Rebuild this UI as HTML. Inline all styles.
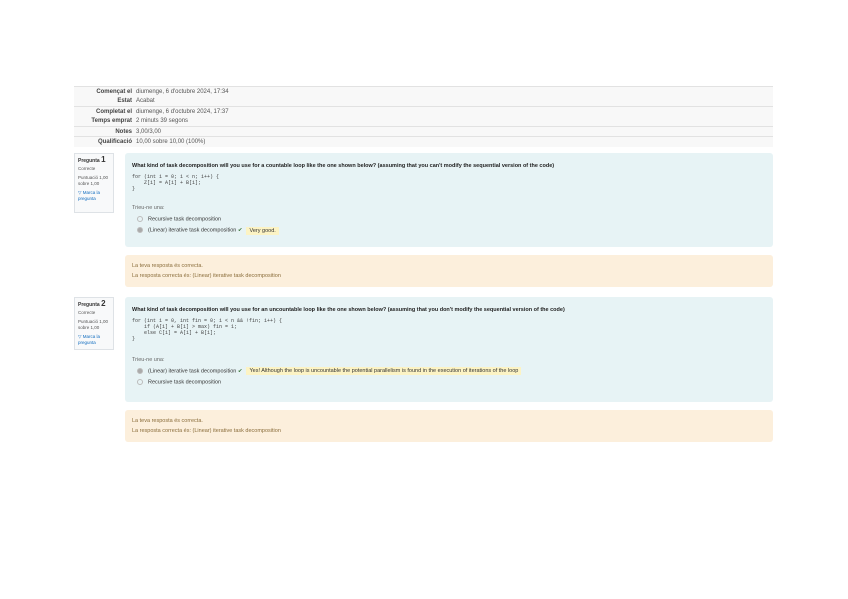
<!DOCTYPE html>
<html><head><style>
body{margin:0;width:848px;height:599px;background:#fff;font-family:"Liberation Sans",sans-serif;color:#333;position:relative;overflow:hidden}
.abs{position:absolute;box-sizing:border-box}
.t{left:74px;width:699px;font-size:6px;line-height:10px}
.row{position:absolute;left:0;width:699px;height:10px;background:#f8f8f8;border-top:1px solid #e2e2e2}
.row b{position:absolute;right:641px;font-weight:bold;color:#444}
.row span{position:absolute;left:62px;color:#555}
.info{left:74px;width:40px;background:#f8f9fa;border:1px solid #dee2e6;font-size:4.5px;line-height:6px;padding:3px;color:#555}
.info .q{font-size:5px;font-weight:bold;color:#333}
.info .q i{font-style:normal;font-size:8px}
.info a{color:#0f6cbf}
.que{left:125px;width:648px;background:#e7f3f5;border-radius:3px;font-size:5.5px;line-height:7px;padding:10px 7px}
.que .h{font-weight:bold;color:#222}
.code{font-family:"Liberation Mono",monospace;font-size:5px;line-height:6px;color:#444;margin-top:4px;white-space:pre}
.fb{left:125px;width:648px;background:#fcefdc;border-radius:3px;font-size:5.5px;line-height:7px;padding:8px 7px;color:#8a6d3b}
.opt{margin-left:5px;margin-top:4px}
.rad{display:inline-block;width:4px;height:4px;border:1px solid #bbb;border-radius:50%;vertical-align:middle;margin-right:5px}
.hl{background:#fcf3c4;padding:1px 3px;margin-left:4px}
.ck{color:#3c763d}
</style></head><body>
<div class="abs t" style="top:86px;height:61px">
<div class="row" style="top:0"><b>Començat el</b><span>diumenge, 6 d'octubre 2024, 17:34</span></div>
<div class="row" style="top:10px;border-top:none"><b>Estat</b><span>Acabat</span></div>
<div class="row" style="top:20px"><b>Completat el</b><span>diumenge, 6 d'octubre 2024, 17:37</span></div>
<div class="row" style="top:30px;border-top:none"><b>Temps emprat</b><span>2 minuts 39 segons</span></div>
<div class="row" style="top:40px"><b>Notes</b><span>3,00/3,00</span></div>
<div class="row" style="top:50px"><b>Qualificació</b><span>10,00 sobre 10,00 (100%)</span></div>
</div>

<div class="abs info" style="top:153px;height:60px"><div class="q">Pregunta <i>1</i></div><div style="margin-top:2px">Correcte</div><div style="margin-top:3px">Puntuació 1,00 sobre 1,00</div><div style="margin-top:3px"><a>▽ Marca la pregunta</a></div></div>
<div class="abs que" style="top:153px;height:94px">
<div class="h">What kind of task decomposition will you use for a countable loop like the one shown below? (assuming that you can't modify the sequential version of the code)</div>
<div class="code">for (int i = 0; i &lt; n; i++) {
    Z[i] = A[i] + B[i];
}</div>
<div style="margin-top:13px;color:#666">Trieu-ne una:</div>
<div class="opt"><span class="rad"></span>Recursive task decomposition</div>
<div class="opt"><span class="rad" style="background:#aaa"></span>(Linear) iterative task decomposition <span class="ck">✔</span><span class="hl">Very good.</span></div>
</div>
<div class="abs fb" style="top:255px;height:32px">La teva resposta és correcta.<div style="margin-top:3px">La resposta correcta és: (Linear) iterative task decomposition</div></div>

<div class="abs info" style="top:297px;height:53px"><div class="q">Pregunta <i>2</i></div><div style="margin-top:2px">Correcte</div><div style="margin-top:3px">Puntuació 1,00 sobre 1,00</div><div style="margin-top:3px"><a>▽ Marca la pregunta</a></div></div>
<div class="abs que" style="top:297px;height:105px">
<div class="h">What kind of task decomposition will you use for an uncountable loop like the one shown below? (assuming that you don't modify the sequential version of the code)</div>
<div class="code">for (int i = 0, int fin = 0; i &lt; n &amp;&amp; !fin; i++) {
    if (A[i] + B[i] &gt; max) fin = 1;
    else C[i] = A[i] + B[i];
}</div>
<div style="margin-top:15px;color:#666">Trieu-ne una:</div>
<div class="opt"><span class="rad" style="background:#aaa"></span>(Linear) iterative task decomposition <span class="ck">✔</span><span class="hl">Yes! Although the loop is uncountable the potential parallelism is found in the execution of iterations of the loop</span></div>
<div class="opt"><span class="rad"></span>Recursive task decomposition</div>
</div>
<div class="abs fb" style="top:410px;height:32px">La teva resposta és correcta.<div style="margin-top:3px">La resposta correcta és: (Linear) iterative task decomposition</div></div>
</body></html>
